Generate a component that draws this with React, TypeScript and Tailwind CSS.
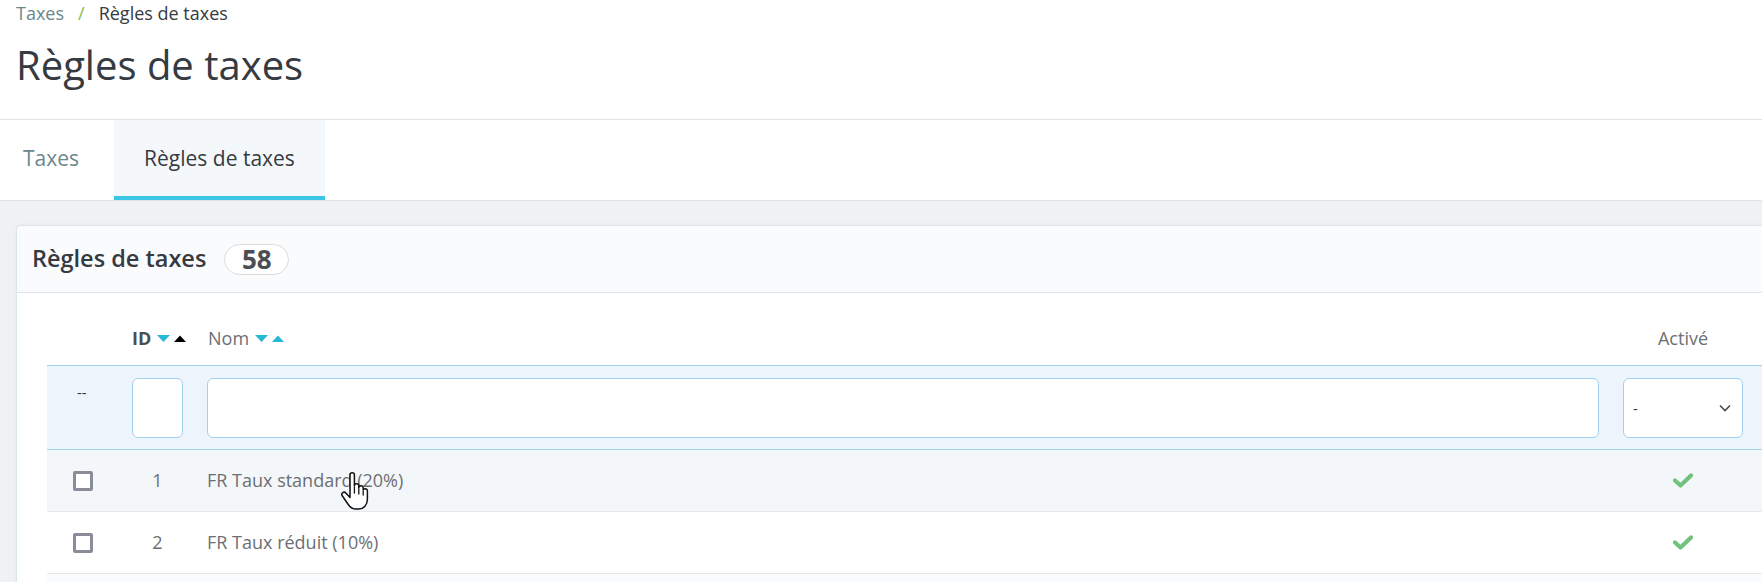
import React from 'react';

const rows = [
  { id: 1, name: 'FR Taux standard (20%)', hover: true },
  { id: 2, name: 'FR Taux réduit (10%)', hover: false },
];

function SortArrows({ upDark }: { upDark?: boolean }) {
  return (
    <span className="ml-[6px] inline-flex items-center gap-[4px]">
      <svg width="13" height="8" viewBox="0 0 13 8">
        <path d="M0 0 H13 L6.5 7 Z" fill="#25b9d7" />
      </svg>
      <svg width="12" height="8" viewBox="0 0 12 8">
        <path d="M0 7 H12 L6 0.5 Z" fill={upDark ? '#000' : '#25b9d7'} />
      </svg>
    </span>
  );
}

function Check() {
  return (
    <svg width="20" height="15" viewBox="0 0 20 15">
      <path d="M2 7.5 L7.5 12.5 L18 2.5" fill="none" stroke="#72c27f" strokeWidth="4.2" strokeLinejoin="round" strokeLinecap="round" />
    </svg>
  );
}

function Checkbox() {
  return <span className="block w-[20px] h-[20px] rounded-[2px] border-[3px] border-[#8a8d99] bg-white" />;
}

function HandCursor() {
  return (
    <svg className="absolute left-[341px] top-[472px]" width="28" height="40" viewBox="0 0 28 40">
      <path
        d="M9 3 a2.2 2.2 0 0 1 4.4 0 v11 a2.2 2.2 0 0 1 4.4 0 v2 a2.2 2.2 0 0 1 4.4 0 v2 a2.2 2.2 0 0 1 4.2 1 v8 c0 6 -3.5 10 -9 10 h-3 c-3.5 0 -5.5 -2 -7.5 -5 l-5.5 -8 a2.2 2.2 0 0 1 3.4 -3 l4.2 4.5 z"
        fill="#fff"
        stroke="#111"
        strokeWidth="1.5"
        strokeLinejoin="round"
      />
      <path d="M13.4 15 v6 M17.8 17 v5 M22.2 19 v4" stroke="#111" strokeWidth="1.3" strokeLinecap="round" />
    </svg>
  );
}

export default function App() {
  return (
    <div className="relative w-[1762px] h-[582px] overflow-hidden bg-white font-['Open_Sans','Noto_Sans',sans-serif]">
      {/* page header */}
      <header className="h-[120px] border-b border-[#dfe3e6] pl-[16px]">
        <nav className="h-[26px] flex items-center text-[18px] leading-none">
          <span className="text-[#6c868e]">Taxes</span>
          <span className="mx-[14px] text-[#8bb85a]">/</span>
          <span className="text-[#363a41]">Règles de taxes</span>
        </nav>
        <h1 className="mt-[19px] text-[40px] leading-[40px] text-[#363a41]">Règles de taxes</h1>
      </header>

      {/* tabs */}
      <div className="h-[81px] flex border-b border-[#dfe3e6]">
        <div className="w-[114px] h-[80px] flex items-center pl-[23px] pb-[4px] pt-[1px] text-[21px] text-[#6c868e]">Taxes</div>
        <div className="w-[211px] h-[80px] flex items-center justify-center pt-[1px] bg-[#f4f8fb] border-b-4 border-[#3ac7e6] text-[21px] text-[#363a41]">
          Règles de taxes
        </div>
      </div>

      {/* content */}
      <main className="h-full bg-[#eff1f2] pl-[16px] pt-[24px]">
        <section className="w-[1800px] h-[500px] rounded-t-[5px] border border-[#dbe6e9] bg-white shadow-[0_0_4px_rgba(0,0,0,0.04)]">
          <div className="h-[67px] flex items-center pl-[15px] bg-[#fafbfc] border-b border-[#dbe6e9] rounded-t-[5px]">
            <h2 className="text-[23.5px] font-semibold text-[#363a41]">Règles de taxes</h2>
            <span className="ml-[18px] h-[31px] w-[65px] flex items-center justify-center rounded-full border border-[#dcdcdc] bg-white text-[26px] font-bold text-[#4a4d52] leading-none">
              58
            </span>
          </div>

          <div className="pl-[30px] text-[18px]">
            {/* column headers */}
            <div className="h-[72px] grid grid-cols-[85px_75px_1416px_120px_1fr] items-end pb-[13px]">
              <div />
              <div className="flex items-center font-bold text-[#4a4d52]">
                ID
                <SortArrows upDark />
              </div>
              <div className="flex items-center pl-[1px] text-[#6c6f73]">
                Nom
                <SortArrows />
              </div>
              <div className="text-center text-[#6c6f73]">Activé</div>
              <div />
            </div>

            {/* filters */}
            <div className="h-[85px] grid grid-cols-[85px_75px_1416px_120px_1fr] border-y border-[#a4d3ec] bg-[#edf4fb]">
              <div className="pl-[30px] pt-[15px] text-[#363a41] text-[15px]">--</div>
              <div className="pt-[12px]">
                <div className="w-[51px] h-[60px] rounded-[6px] border border-[#9fd2ee] bg-white" />
              </div>
              <div className="pt-[12px]">
                <div className="w-[1392px] h-[60px] rounded-[6px] border border-[#9fd2ee] bg-white" />
              </div>
              <div className="pt-[12px]">
                <div className="w-[120px] h-[60px] rounded-[6px] border border-[#9fd2ee] bg-white flex items-center justify-between pl-[9px] pr-[11px] text-[15px] text-[#363a41]">
                  <span>-</span>
                  <svg width="12" height="8" viewBox="0 0 12 8">
                    <path d="M1 1.5 L6 6.5 L11 1.5" fill="none" stroke="#4a4a4a" strokeWidth="1.6" />
                  </svg>
                </div>
              </div>
              <div />
            </div>

            {/* rows */}
            {rows.map((r) => (
              <div
                key={r.id}
                className={`h-[62px] grid grid-cols-[85px_75px_1416px_120px_1fr] items-center border-b border-[#e5e9ec] text-[#6c6f73] ${r.hover ? 'bg-[#f4f7fa]' : 'bg-white'}`}
              >
                <div className="pl-[26px]">
                  <Checkbox />
                </div>
                <div className="w-[51px] text-center">{r.id}</div>
                <div>{r.name}</div>
                <div className="flex justify-center">
                  <Check />
                </div>
                <div />
              </div>
            ))}
            <div className="h-[40px] bg-[#fafbfc]" />
          </div>
        </section>
      </main>

      <HandCursor />
    </div>
  );
}
